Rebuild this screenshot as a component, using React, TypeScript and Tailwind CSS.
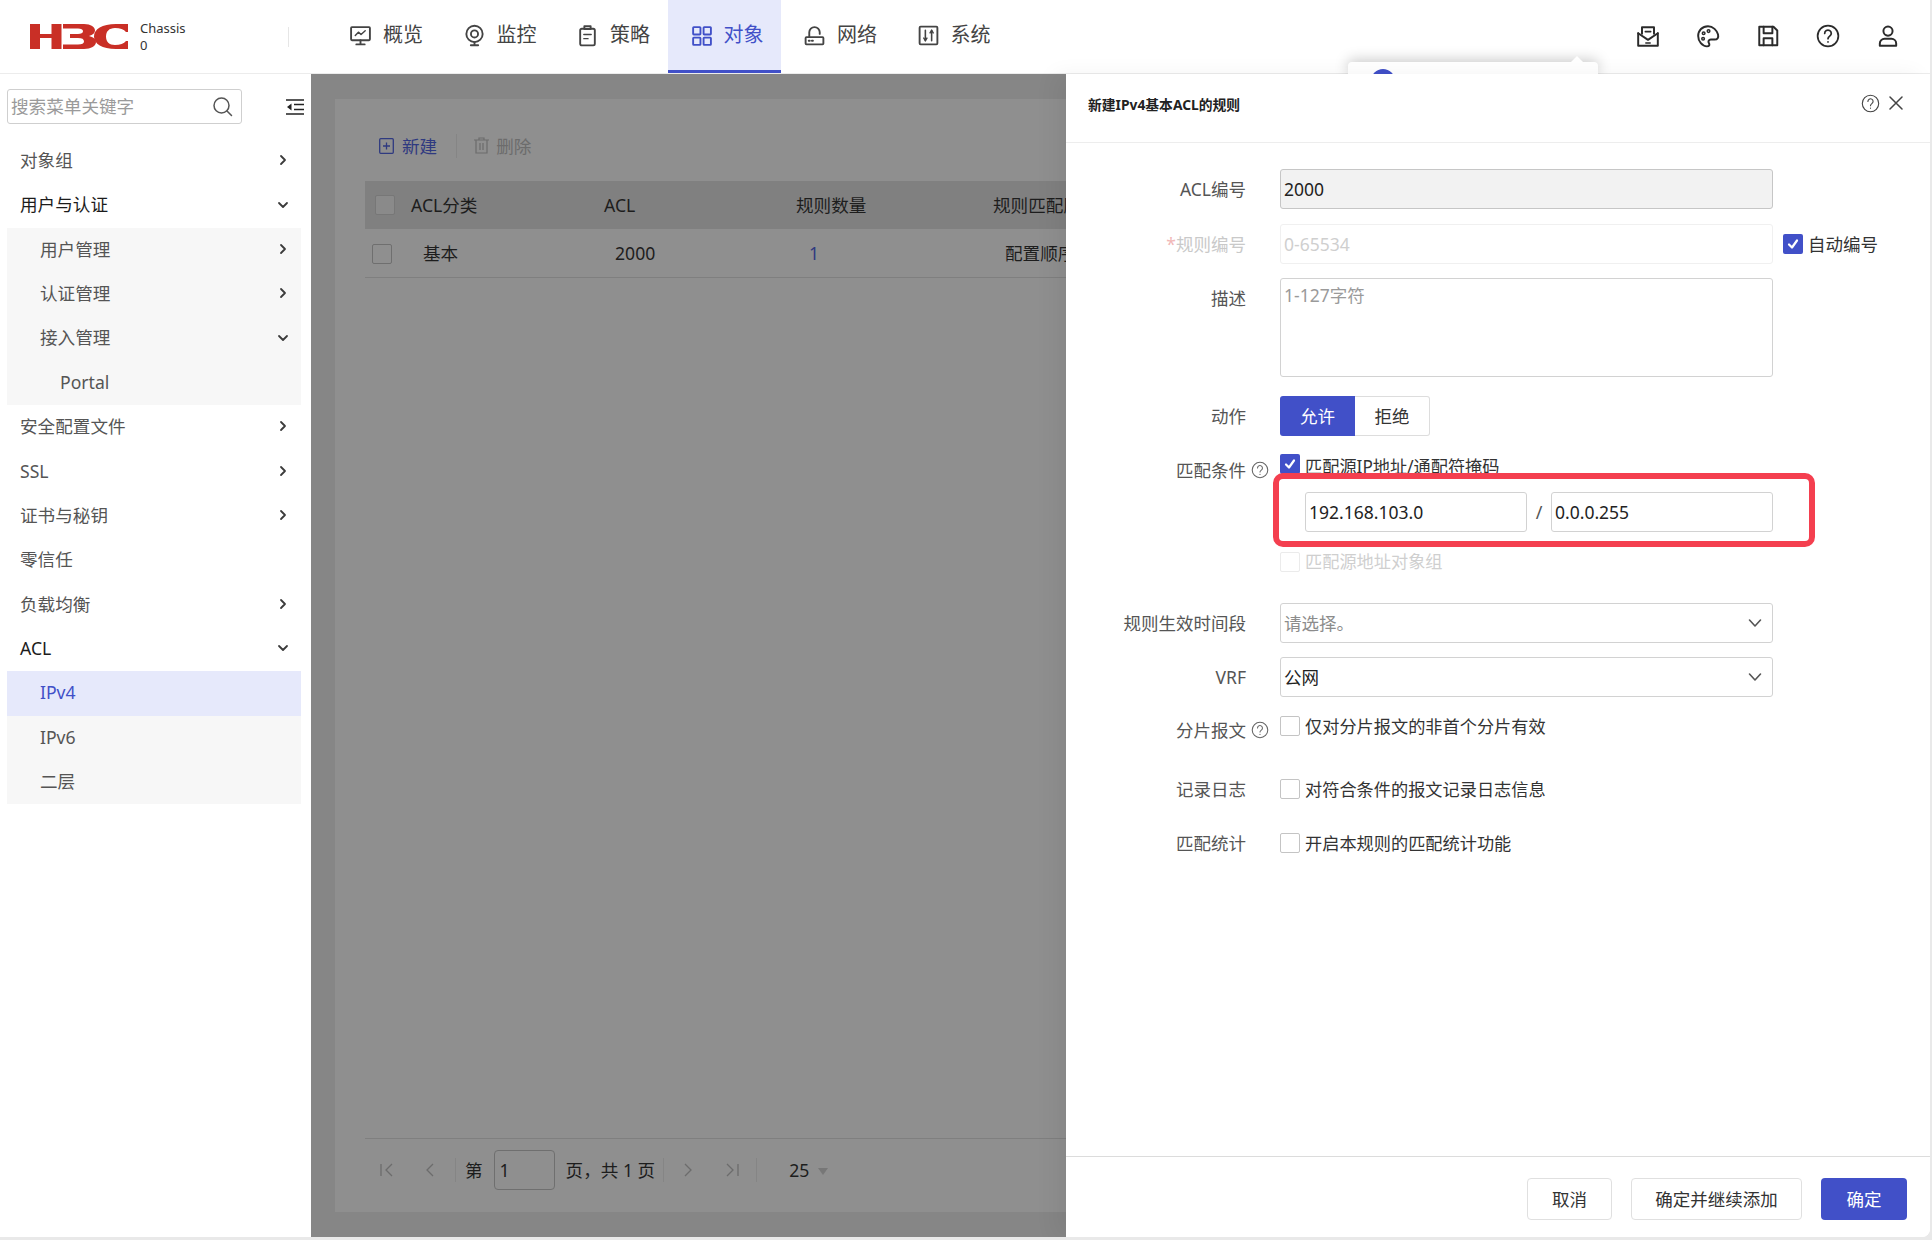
import React from "react";

const FONT = { fontFamily: '"Noto Sans", "Noto Sans CJK SC", sans-serif' };

function Ic({ w = 23, h = 23, children, className = "" }: { w?: number; h?: number; children: React.ReactNode; className?: string }) {
  return (
    <svg width={w} height={h} viewBox="0 0 22 22" fill="none" stroke="currentColor" strokeWidth={1.8} strokeLinecap="round" strokeLinejoin="round" className={className}>
      {children}
    </svg>
  );
}

const IconOverview = () => (
  <Ic>
    <rect x="2" y="3" width="18" height="12.5" rx="0.8" />
    <path d="M6 11l3-3.2 2.5 2.2L15.5 6.500" strokeWidth={1.4} />
    <path d="M11 15.500V19M7 19.500h8" />
  </Ic>
);
const IconMonitor = () => (
  <Ic>
    <circle cx="11" cy="9.500" r="7.800" />
    <circle cx="11" cy="9.500" r="3.400" />
    <path d="M11 17.300v2.500M7.500 20.300h7" />
  </Ic>
);
const IconPolicy = () => (
  <Ic>
    <rect x="4" y="4.500" width="14" height="16" rx="1.500" />
    <path d="M8 4.500V2h6v2.500M8 4.800h6" />
    <path d="M7.500 10h7M7.500 14h4" strokeWidth={1.4} />
  </Ic>
);
const IconObject = () => (
  <Ic>
    <rect x="3" y="3" width="7" height="7" rx="0.600" />
    <rect x="13" y="3" width="7" height="7" rx="0.600" />
    <rect x="3" y="13" width="7" height="7" rx="0.600" />
    <rect x="13" y="13" width="7" height="7" rx="0.600" />
  </Ic>
);
const IconNetwork = () => (
  <Ic>
    <rect x="2.500" y="12.500" width="17" height="7" rx="0.800" />
    <path d="M6 12.500V8a5 5 0 0 1 10 0v1.500" />
    <path d="M5.500 16h1M8.500 16h1" />
  </Ic>
);
const IconSystem = () => (
  <Ic>
    <rect x="2.500" y="2.500" width="17" height="17" rx="1" />
    <path d="M8 6v10M14 6v10" strokeWidth={1.500} />
    <path d="M6.500 13.500L8 16l1.500-2.500M12.500 8.500L14 6l1.500 2.500" strokeWidth={1.400} />
  </Ic>
);
const IconMail = () => (
  <Ic w={24} h={24}>
    <path d="M5.500 9V3h11v6" />
    <path d="M2 8.500V20h18V8.500" />
    <path d="M2 8.500l9 6 9-6" />
    <path d="M8.500 7h5" strokeWidth={1.400} />
    <path d="M9 17.500h4" strokeWidth={1.400} />
  </Ic>
);
const IconPalette = () => (
  <Ic w={24} h={24}>
    <path d="M11 2C5.800 2 2 6 2 11s3.800 9.500 8 9.500c2.500 0 2.600-1.700 1.800-3-.9-1.400-.2-3.200 1.800-3.200H17c2.800 0 3.800-2 3.200-4.600C19.300 6 15.600 2 11 2z" />
    <circle cx="7" cy="8.500" r="1.200" strokeWidth={1.400} />
    <circle cx="11.500" cy="6.500" r="1.200" strokeWidth={1.400} />
    <circle cx="6.500" cy="13.500" r="1.200" strokeWidth={1.400} />
  </Ic>
);
const IconSave = () => (
  <Ic w={24} h={24}>
    <path d="M3 2.500h13l3.500 3.500v13.500H3z" />
    <path d="M7 2.500v6h8v-6M7 19.500v-6.500h8v6.500" />
  </Ic>
);
const Help = ({ s = 24, sw = 1.6 }: { s?: number; sw?: number }) => (
  <svg width={s} height={s} viewBox="0 0 22 22" fill="none" stroke="currentColor" strokeWidth={sw} strokeLinecap="round">
    <circle cx="11" cy="11" r="9.500" />
    <path d="M8 8.600a3 3 0 1 1 4.600 2.500c-1 .7-1.600 1.200-1.600 2.400" />
    <path d="M11 16.300v.2" />
  </svg>
);
const IconUser = () => (
  <Ic w={24} h={24}>
    <circle cx="11" cy="6.500" r="4.200" />
    <path d="M3.500 20v-2.200c0-2.400 2-4.300 4.300-4.300h6.400c2.300 0 4.300 1.900 4.300 4.300V20z" />
  </Ic>
);

const Logo = () => (
  <svg width="101" height="25" viewBox="0 0 101 25" fill="#c92f26" aria-label="H3C">
    <path d="M2 0h10v25H2zM23.500 0h10v25h-10zM11 10h13v4H11z" />
    <path d="M35 0H56C63 0 67 3 67 6.500C67 9 65 11 61 12C65 13 68 15 68 18C68 22 63 25 56 25H35V20.500H50C54 20.500 56 19.500 56 17.500C56 15 54 14 50 14H42V10H50C53 10 55 9 55 7.200C55 5.500 53 4.500 50 4.500H35Z" />
    <path d="M100 0V8H98C96 5.500 92 4 87 4C81 4 78 7.500 78 12.500C78 17.500 81 21 87 21C92 21 96 19.500 98 17H100V25H88C74 25 66 20 66 12.500C66 5 74 0 88 0Z" />
  </svg>
);

const Chev = ({ open, color = "#3b3b3b" }: { open?: boolean; color?: string }) => (
  <svg width="12" height="12" viewBox="0 0 12 12" fill="none" stroke={color} strokeWidth={1.8} strokeLinecap="round" strokeLinejoin="round">
    {open ? <path d="M2 4l4 4 4-4" /> : <path d="M4 2l4 4-4 4" />}
  </svg>
);

function Row({ label, chev, sub, dark, active, indent = 0 }: { label: string; chev?: "r" | "d"; sub?: boolean; dark?: boolean; active?: boolean; indent?: number }) {
  const pl = indent === 2 ? "pl-[53px]" : indent === 1 ? "pl-[33px]" : "pl-[13px]";
  return (
    <div className={`flex h-[44.36px] items-center justify-between pb-[2px] pr-[12px] text-[17.6px] ${pl} ${active ? "bg-[#e6e9fb] text-[#4150c8]" : dark ? "text-[#1c1c1c]" : "text-[#555555]"} ${sub && !active ? "bg-[#f7f7f7]" : ""}`}>
      <span>{label}</span>
      {chev && <Chev open={chev === "d"} />}
    </div>
  );
}

const nav = [
  { t: "概览", I: IconOverview },
  { t: "监控", I: IconMonitor },
  { t: "策略", I: IconPolicy },
  { t: "对象", I: IconObject, active: true },
  { t: "网络", I: IconNetwork },
  { t: "系统", I: IconSystem },
];

function Label({ children, help, faint, className = "" }: { children: React.ReactNode; help?: boolean; faint?: boolean; className?: string }) {
  return (
    <div className={`relative w-[180px] shrink-0 text-right text-[17.5px] leading-[24px] ${faint ? "text-[#c9c9c9]" : "text-[#555555]"} ${className}`}>
      {children}
      {help && (
        <span className="absolute left-[185px] top-[3px] text-[#666666]">
          <Help s={18} sw={1.300} />
        </span>
      )}
    </div>
  );
}

function Check({ checked, faint }: { checked?: boolean; faint?: boolean }) {
  return checked ? (
    <span className="flex h-[20px] w-[20px] shrink-0 items-center justify-center rounded-[2px] bg-[#4150c8]">
      <svg width="14" height="14" viewBox="0 0 14 14" fill="none" stroke="white" strokeWidth={2.200} strokeLinecap="round" strokeLinejoin="round">
        <path d="M3 7.500l3 3 5-7" />
      </svg>
    </span>
  ) : (
    <span className={`block h-[20px] w-[20px] shrink-0 rounded-[2px] border bg-white ${faint ? "border-[#ebebeb]" : "border-[#c4c4c4]"}`} />
  );
}

const inputBase = "flex h-[40px] items-center rounded-[3px] border pl-[3px] text-[17.5px]";

function Select({ value, placeholder }: { value: string; placeholder?: boolean }) {
  return (
    <div className={`${inputBase} w-[493px] justify-between border-[#d2d2d2] bg-white pr-[10px] ${placeholder ? "text-[#8c8c8c]" : "text-[#222222]"}`}>
      <span>{value}</span>
      <svg width="14" height="14" viewBox="0 0 14 14" fill="none" stroke="#555555" strokeWidth={1.600} strokeLinecap="round" strokeLinejoin="round">
        <path d="M1.500 4l5.500 6 5.500-6" />
      </svg>
    </div>
  );
}

function CheckRow({ label, text, help, labelClass, className }: { label: string; text: string; help?: boolean; labelClass?: string; className: string }) {
  return (
    <div className={`flex ${className}`}>
      <Label help={help} className={labelClass}>{label}</Label>
      <div className="ml-[34px] flex items-center gap-[5px]">
        <Check />
        <span className="mt-[2px] text-[17.2px] leading-[24px] text-[#333333]">{text}</span>
      </div>
    </div>
  );
}

export default function App() {
  return (
    <div className="h-[1240px] w-[1932px] overflow-hidden bg-[#e9e9e9]" style={FONT}>
      <div className="flex h-[1237px] w-[1930px] flex-col overflow-hidden rounded-br-[8px] bg-white">
        {/* top bar */}
        <header className="relative flex h-[74px] shrink-0 items-center border-b border-[#ececec] bg-white">
          <div className="ml-[28px] mt-[-1px] flex">
            <Logo />
          </div>
          <div className="ml-[11px] w-[60px] text-[13px] leading-[17px] text-[#333333]">
            <div>Chassis</div>
            <div>0</div>
          </div>
          <div className="ml-[88px] h-[20px] w-px bg-[#e6e6e6]" />
          <nav className="ml-[38px] flex h-[73px]">
            {nav.map(({ t, I, active }) => (
              <div key={t} className={`flex h-full w-[113.5px] items-center gap-[11px] border-b-[3px] pl-[22px] text-[20px] ${active ? "border-[#4150c8] bg-[#e6e9fb] text-[#4150c8]" : "border-transparent text-[#444444]"}`}>
                <I />
                <span>{t}</span>
              </div>
            ))}
          </nav>
          <div className="ml-auto mr-[30px] mt-[-2px] flex gap-[36px] text-[#2b2b2b]">
            <IconMail />
            <IconPalette />
            <IconSave />
            <Help />
            <IconUser />
          </div>
          {/* tooltip peeking out behind the drawer */}
          <div className="absolute left-[1348px] top-[62px] h-[14px] w-[250px] rounded-t-[4px] bg-white shadow-[0_-2px_14px_rgba(0,0,0,0.22)]">
            <div className="absolute left-[23px] top-[7px] h-[24px] w-[24px] rounded-full bg-[#4150c8]" />
            <div className="absolute right-[14px] top-[-6px] h-0 w-0 border-x-[7px] border-b-[7px] border-x-transparent border-b-white" />
          </div>
        </header>

        <div className="flex min-h-0 flex-1">
          {/* sidebar */}
          <aside className="w-[311px] shrink-0 bg-white">
            <div className="flex items-center pt-[15px]">
              <div className="ml-[7px] flex h-[35px] w-[235px] items-center justify-between rounded-[3px] border border-[#cfcfcf] pl-[3px] pr-[8px] text-[17.6px] text-[#9a9a9a]">
                <span>搜索菜单关键字</span>
                <svg width="21" height="21" viewBox="0 0 21 21" fill="none" stroke="#555555" strokeWidth={1.500} strokeLinecap="round">
                  <circle cx="9.500" cy="9.500" r="7.500" />
                  <path d="M15 15l4.500 4.500" />
                </svg>
              </div>
              <svg className="ml-[44px]" width="18" height="16" viewBox="0 0 18 16" fill="none" stroke="#222222" strokeWidth={1.600}>
                <path d="M0 1h18M0 15h18M8 5.500h10M8 10.500h10" />
                <path d="M5.500 4.500v7L1 8z" fill="#222222" stroke="none" />
              </svg>
            </div>
            <div className="ml-[7px] mt-[15px] w-[294px]">
              <Row label="对象组" chev="r" />
              <Row label="用户与认证" chev="d" dark />
              <Row label="用户管理" chev="r" sub indent={1} />
              <Row label="认证管理" chev="r" sub indent={1} />
              <Row label="接入管理" chev="d" sub indent={1} />
              <Row label="Portal" sub indent={2} />
              <Row label="安全配置文件" chev="r" />
              <Row label="SSL" chev="r" />
              <Row label="证书与秘钥" chev="r" />
              <Row label="零信任" />
              <Row label="负载均衡" chev="r" />
              <Row label="ACL" chev="d" dark />
              <Row label="IPv4" sub active indent={1} />
              <Row label="IPv6" sub indent={1} />
              <Row label="二层" sub indent={1} />
            </div>
          </aside>

          {/* dimmed main area */}
          <main className="min-w-0 flex-1 overflow-hidden bg-[#868686] pl-[24px] pt-[25px]">
            <div className="flex h-[1113px] w-[800px] flex-col bg-[#8f8f8f] pl-[30px] text-[#1d1d1d]">
              <div className="flex h-[82px] items-center pt-[12px] text-[17.6px]">
                <div className="ml-[14px] flex items-center gap-[8px] text-[#2f3a80]">
                  <svg width="15" height="16" viewBox="0 0 15 16" fill="none" stroke="currentColor" strokeWidth={1.300}>
                    <rect x="0.700" y="0.700" width="13.600" height="14.600" rx="1" />
                    <path d="M7.500 4.500v7M4 8h7" />
                  </svg>
                  <span>新建</span>
                </div>
                <div className="ml-[19px] h-[24px] w-px bg-[#858585]" />
                <div className="ml-[17px] flex items-center gap-[7px] text-[#6c6c6c]">
                  <svg width="15" height="17" viewBox="0 0 15 17" fill="none" stroke="currentColor" strokeWidth={1.200}>
                    <path d="M0 3h15M5 3V1h5v2M2 3v13h11V3M6 6v7M9 6v7" />
                  </svg>
                  <span>删除</span>
                </div>
              </div>
              <div className="flex h-[48px] items-center bg-[#808080] text-[17.6px]">
                <span className="ml-[10px] block h-[20px] w-[20px] rounded-[2px] border border-[#777777] bg-[#8a8a8a]" />
                <span className="ml-[16px] w-[193px]">ACL分类</span>
                <span className="w-[192px]">ACL</span>
                <span className="w-[197px] whitespace-nowrap">规则数量</span>
                <span className="whitespace-nowrap">规则匹配顺序</span>
              </div>
              <div className="flex h-[49px] items-center border-b border-[#7f7f7f] pt-[1px] text-[17.6px]">
                <span className="ml-[7px] block h-[20px] w-[20px] rounded-[2px] border border-[#6f6f6f] bg-[#8f8f8f]" />
                <span className="ml-[31px] w-[192px]">基本</span>
                <span className="w-[194px]">2000</span>
                <span className="w-[196px] text-[#2f3a80]">1</span>
                <span className="whitespace-nowrap">配置顺序</span>
              </div>
              <div className="flex-1" />
              <div className="flex h-[74px] items-start border-t border-[#7f7f7f] pt-[11px] text-[17.6px]">
                <div className="flex h-[40px] items-center">
                  <svg className="ml-[15px]" width="13" height="14" viewBox="0 0 13 14" fill="none" stroke="#6c6c6c" strokeWidth={1.300}><path d="M1 1v12M12 1L6 7l6 6" /></svg>
                  <svg className="ml-[33px]" width="8" height="14" viewBox="0 0 8 14" fill="none" stroke="#6c6c6c" strokeWidth={1.300}><path d="M7 1L1 7l6 6" /></svg>
                  <div className="ml-[21px] h-[24px] w-px bg-[#858585]" />
                  <span className="ml-[9px]">第</span>
                  <span className="ml-[11px] flex h-[40px] w-[61px] items-center rounded-[4px] border border-[#6f6f6f] pl-[5px]">1</span>
                  <span className="ml-[11px] whitespace-nowrap">页，共 1 页</span>
                  <div className="ml-[8px] h-[24px] w-px bg-[#858585]" />
                  <svg className="ml-[20px]" width="8" height="14" viewBox="0 0 8 14" fill="none" stroke="#6c6c6c" strokeWidth={1.300}><path d="M1 1l6 6-6 6" /></svg>
                  <svg className="ml-[34px]" width="13" height="14" viewBox="0 0 13 14" fill="none" stroke="#6c6c6c" strokeWidth={1.300}><path d="M12 1v12M1 1l6 6-6 6" /></svg>
                  <div className="ml-[17px] h-[24px] w-px bg-[#858585]" />
                  <span className="ml-[32px]">25</span>
                  <span className="ml-[9px] mt-[3px] h-0 w-0 border-x-[5px] border-t-[7px] border-x-transparent border-t-[#777777]" />
                </div>
              </div>
            </div>
          </main>

          {/* drawer */}
          <section className="relative flex w-[864px] shrink-0 flex-col bg-white shadow-[-12px_0_20px_rgba(0,0,0,0.05)]">
            <div className="flex h-[69px] shrink-0 items-center justify-between border-b border-[#ededed] pb-[6px] pl-[22px] pr-[27px]">
              <span className="text-[13.8px] font-bold text-[#222222]">新建IPv4基本ACL的规则</span>
              <div className="mt-[-4px] flex items-center gap-[9px] text-[#444444]">
                <Help s={19} sw={1.300} />
                <svg width="14" height="14" viewBox="0 0 14 14" fill="none" stroke="currentColor" strokeWidth={1.500} strokeLinecap="round"><path d="M1 1l12 12M13 1L1 13" /></svg>
              </div>
            </div>

            <div className="flex-1 pl-0">
              {/* ACL number */}
              <div className="mt-[26px] flex items-center">
                <Label>ACL编号</Label>
                <div className={`${inputBase} ml-[34px] w-[493px] border-[#c6c6c6] bg-[#f2f2f2] text-[#222222]`}>2000</div>
              </div>
              {/* rule number */}
              <div className="mt-[15px] flex items-center">
                <Label faint><span className="text-[#f1b7b7]">*</span>规则编号</Label>
                <div className={`${inputBase} ml-[34px] w-[493px] border-[#f0f0f0] text-[#cfcfcf]`}>0-65534</div>
                <div className="ml-[10px] flex items-center gap-[5px]">
                  <Check checked />
                  <span className="text-[17.5px] text-[#333333]">自动编号</span>
                </div>
              </div>
              {/* description */}
              <div className="mt-[14px] flex">
                <Label className="mt-[8px]">描述</Label>
                <div className="ml-[34px] h-[99px] w-[493px] rounded-[3px] border border-[#d2d2d2] pl-[3px] pt-[3px] text-[17.5px] leading-[27px] text-[#9a9a9a]">1-127字符</div>
              </div>
              {/* action */}
              <div className="mt-[19px] flex items-center">
                <Label>动作</Label>
                <div className="ml-[34px] flex h-[40px] text-[17.5px]">
                  <span className="flex w-[75px] items-center justify-center rounded-l-[3px] bg-[#4150c8] text-white">允许</span>
                  <span className="flex w-[75px] items-center justify-center rounded-r-[3px] border border-l-0 border-[#dddddd] text-[#333333]">拒绝</span>
                </div>
              </div>
              {/* match conditions */}
              <div className="relative mt-[18px] flex">
                <Label help className="mt-[4px]">匹配条件</Label>
                <div className="ml-[34px]">
                  <div className="flex h-[20px] items-start gap-[5px] overflow-visible">
                    <Check checked />
                    <span className="mt-[1px] text-[17.2px] leading-[24px] text-[#333333]">匹配源IP地址/通配符掩码</span>
                  </div>
                  <div className="ml-[25px] mt-[18px] flex items-center">
                    <div className={`${inputBase} w-[222px] border-[#d2d2d2] bg-white text-[#222222]`}>192.168.103.0</div>
                    <span className="w-[24px] text-center text-[18px] text-[#555555]">/</span>
                    <div className={`${inputBase} w-[222px] border-[#d2d2d2] bg-white text-[#222222]`}>0.0.0.255</div>
                  </div>
                  <div className="mt-[18px] flex items-center gap-[5px]">
                    <Check faint />
                    <span className="text-[17.2px] leading-[24px] text-[#cfcfcf]">匹配源地址对象组</span>
                  </div>
                </div>
                {/* red annotation */}
                <div className="absolute left-[207px] top-[19px] h-[74px] w-[542px] rounded-[10px] border-[6px] border-[#f43f4f]" />
              </div>
              {/* time range */}
              <div className="mt-[29px] flex items-center">
                <Label>规则生效时间段</Label>
                <div className="ml-[34px]"><Select value="请选择。" placeholder /></div>
              </div>
              <div className="mt-[14px] flex items-center">
                <Label>VRF</Label>
                <div className="ml-[34px]"><Select value="公网" /></div>
              </div>
              <CheckRow label="分片报文" text="仅对分片报文的非首个分片有效" help className="mt-[17px] h-[24px]" labelClass="mt-[4px]" />
              <CheckRow label="记录日志" text="对符合条件的报文记录日志信息" className="mt-[39px] h-[24px]" />
              <CheckRow label="匹配统计" text="开启本规则的匹配统计功能" className="mt-[30px] h-[24px]" />
            </div>

            <div className="flex h-[81px] shrink-0 justify-end gap-[19px] border-t border-[#dcdcdc] pr-[23px] pt-[21px] text-[17.5px]">
              <span className="flex h-[42px] w-[85px] items-center justify-center rounded-[4px] border border-[#e0e0e0] text-[#333333]">取消</span>
              <span className="flex h-[42px] w-[171px] items-center justify-center rounded-[4px] border border-[#e0e0e0] text-[#333333]">确定并继续添加</span>
              <span className="flex h-[42px] w-[86px] items-center justify-center rounded-[4px] bg-[#4150c8] text-white">确定</span>
            </div>
          </section>
        </div>
      </div>
    </div>
  );
}
